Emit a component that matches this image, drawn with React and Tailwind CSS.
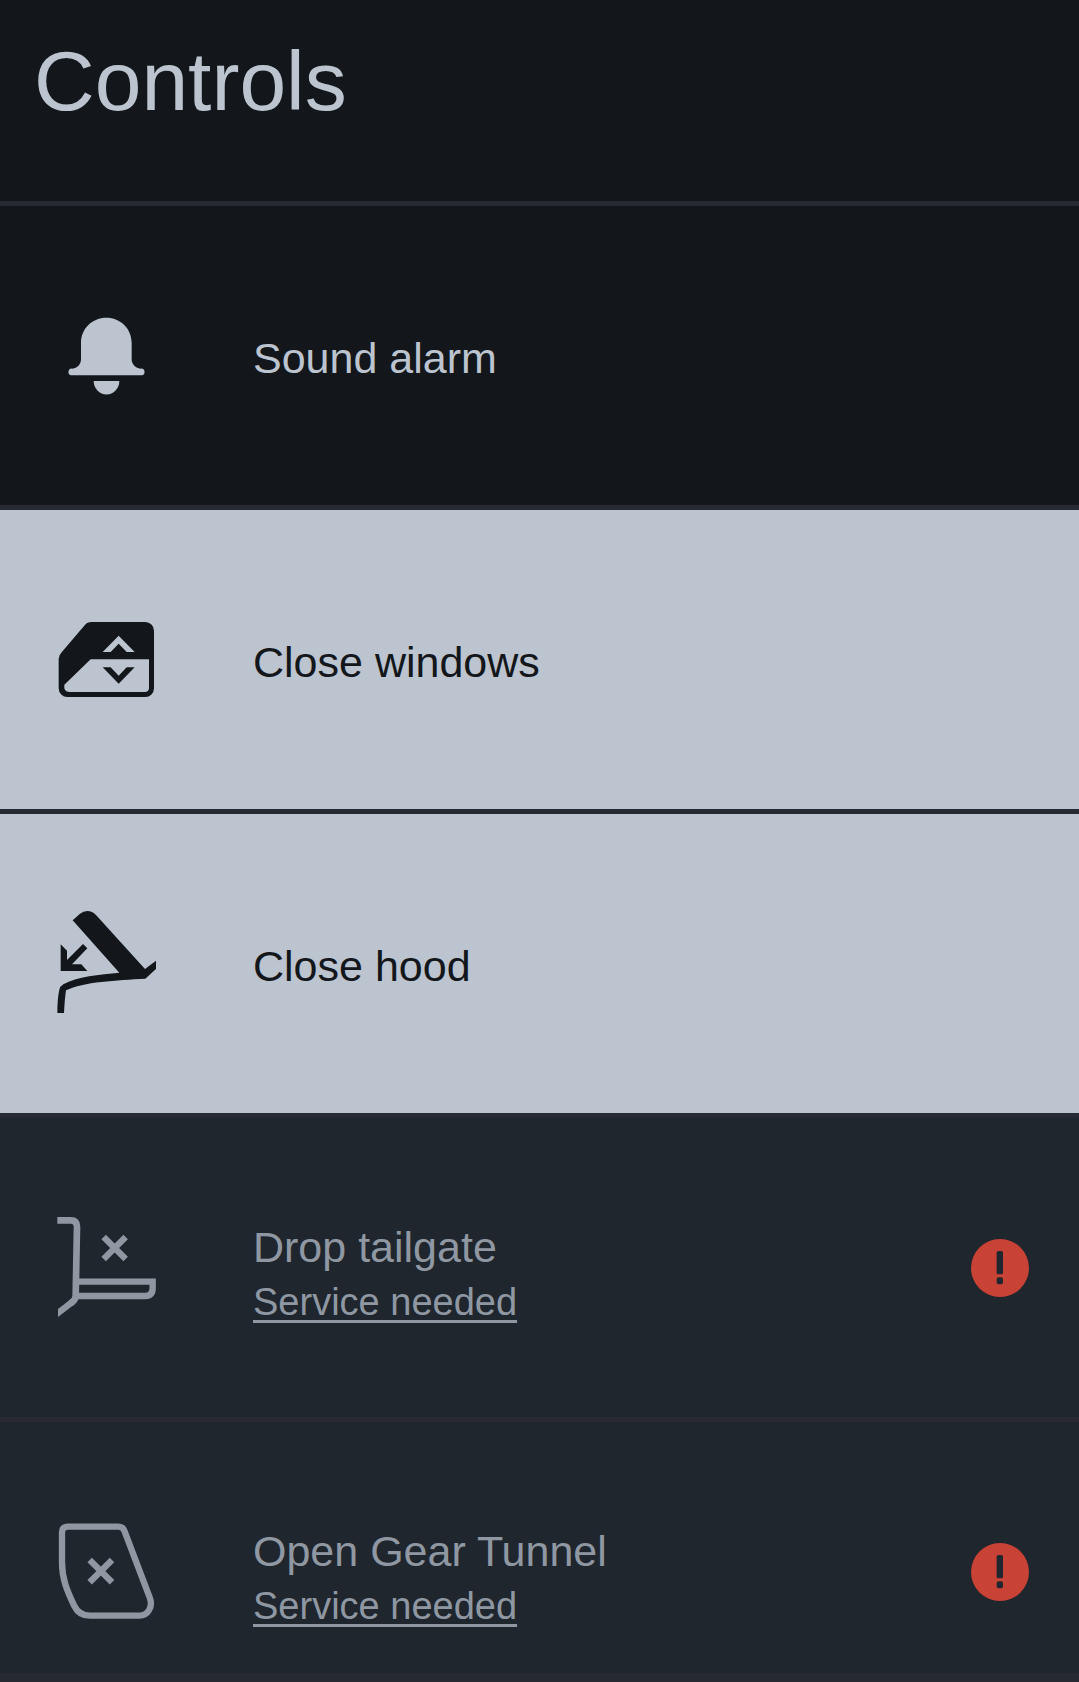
import clsx from "clsx";

const BellIcon = () => (
  <svg viewBox="0 2 390 390" className="w-full" fill="currentColor" aria-hidden="true">
    <path d="M123 158C123 114 157 82 199 82S275 114 275 158V207C275 222 287 234 302 235A10 10 0 0 1 305 255H94A10 10 0 0 1 97 235C112 234 123 222 123 207Z" />
    <path d="M161 272H238A38 40 0 0 1 161 272Z" />
  </svg>
);

const WindowIcon = () => (
  <svg viewBox="0 -15 390 390" className="w-full" fill="currentColor" aria-hidden="true">
    <path
      fillRule="evenodd"
      d="M154 66H316A26 26 0 0 1 342 92V265A26 26 0 0 1 316 291H82A26 26 0 0 1 56 265V177Q56 166 65 157L134 76Q142 66 154 66ZM152 178L73 254Q70 275 88 276H314Q327 276 327 263V178ZM236 107L188 156H212L236 131L260 156H284Z"
    />
    <path d="M188 202H212L236 227L260 202H284L236 251Z" />
  </svg>
);

const HoodIcon = () => (
  <svg viewBox="0 26 390 390" className="w-full" fill="currentColor" aria-hidden="true">
    <path d="M98 90L120 70Q130 62 142 62Q157 62 168 74L315 236L348 211V236L316 265C230 270 130 274 78 300Q74 328 72 368H52Q52 325 58 298Q60 288 70 282C110 259 180 252 238 247Z" />
    <path d="M62 162L81 181V209L129 161L142 174L96 222H124L142 242H62Z" />
  </svg>
);

const TailgateIcon = () => (
  <svg viewBox="0 9 390 390" className="w-full" fill="none" stroke="currentColor" aria-hidden="true">
    <path strokeWidth="20" d="M52 61H92Q111 61 111 80L107 288Q106 299 98 305L92 310" />
    <path strokeWidth="19" d="M108 245H338V264Q338 288 316 288H108" />
    <path strokeWidth="19" d="M191 111L257 177M257 111L191 177" />
    <path fill="currentColor" stroke="none" d="M54 327L92 298L106 311L54 351Z" />
  </svg>
);

const TunnelIcon = () => (
  <svg viewBox="0 5 390 390" className="w-full" fill="none" stroke="currentColor" aria-hidden="true">
    <path
      strokeWidth="19"
      d="M84 64H236Q248 64 253 76L329 276C340 304 324 331 298 331H150Q117 331 103 302C80 254 66 220 66 170V82Q66 64 84 64Z"
    />
    <path strokeWidth="19" d="M149 164L216 231M216 164L149 231" />
  </svg>
);

const AlertIcon = () => (
  <svg viewBox="0 0 174 174" className="w-[58px] shrink-0" role="img" aria-label="Attention">
    <circle cx="87" cy="87" r="87" fill="#c84236" />
    <rect x="77" y="36" width="19" height="70" rx="5" fill="#20262e" />
    <rect x="77" y="115" width="19" height="21" rx="6" fill="#20262e" />
  </svg>
);

const controls = [
  { id: "alarm", label: "Sound alarm", Icon: BellIcon },
  { id: "windows", label: "Close windows", Icon: WindowIcon, active: true },
  { id: "hood", label: "Close hood", Icon: HoodIcon, active: true },
  { id: "tailgate", label: "Drop tailgate", Icon: TailgateIcon, service: true },
  { id: "tunnel", label: "Open Gear Tunnel", Icon: TunnelIcon, service: true, last: true },
];

const rowBase = "flex w-full items-center pl-10 pr-[50px] text-left";

const ControlRow = ({ label, Icon, active }) => (
  <button
    type="button"
    className={clsx(
      rowBase,
      "h-[299px] cursor-pointer",
      active ? "bg-[#bcc4cf] text-[#13171b]" : "text-[#bcc4cf]"
    )}
  >
    <span className="mr-[83px] w-[130px] shrink-0">
      <Icon />
    </span>
    <span className="pt-1 text-[43px] leading-[56px]">{label}</span>
  </button>
);

const ServiceRow = ({ label, Icon, last }) => (
  <div
    className={clsx(
      rowBase,
      "bg-[#20262e] text-[#8f98a2]",
      last ? "h-[251px] pt-12" : "h-[299px]"
    )}
  >
    <span className="mr-[83px] w-[130px] shrink-0">
      <Icon />
    </span>
    <div className="flex flex-1 flex-col items-start pt-3">
      <button type="button" disabled className="text-[43px] leading-[56px]">
        {label}
      </button>
      <a
        href="#service"
        className="text-[38px] leading-[54px] underline decoration-[3px] underline-offset-[5px]"
      >
        Service needed
      </a>
    </div>
    <AlertIcon />
  </div>
);

const App = () => {
  return (
    <main className="min-h-screen bg-[#272a33] font-['Liberation_Sans',Arial,sans-serif]">
      <header className="h-[201px] bg-[#13171b] px-[34px] pt-7">
        <h1 className="text-[84px] leading-[106px] text-[#bcc4cf]">Controls</h1>
      </header>

      <ul>
        {controls.map((c) => (
          <li key={c.id} className="border-t-[5px] border-[#272a33] bg-[#13171b]">
            {c.service ? <ServiceRow {...c} /> : <ControlRow {...c} />}
          </li>
        ))}
      </ul>
    </main>
  );
};

export default App;
